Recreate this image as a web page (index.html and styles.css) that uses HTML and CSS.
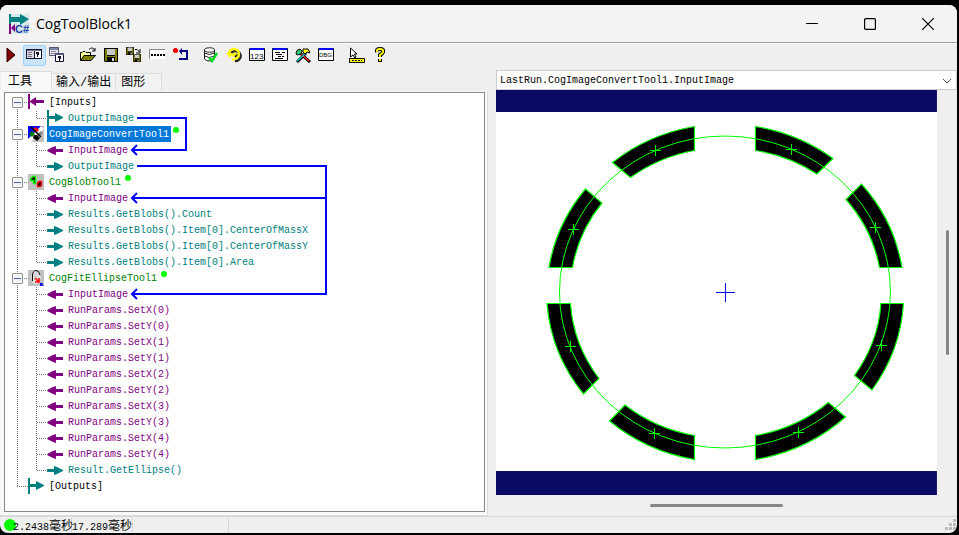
FILE: index.html
```html
<!DOCTYPE html>
<html lang="zh-CN">
<head>
<meta charset="utf-8">
<title>CogToolBlock1</title>
<link rel="stylesheet" href="styles.css">
</head>
<body>
<svg class="defs" aria-hidden="true">
  <symbol id="in" viewBox="0 0 16 16"><path d="M0 8L6 5L9 4V7H16V10H9V13L6 12L0 9Z" fill="#800080"/></symbol>
  <symbol id="out" viewBox="0 0 16 16"><path d="M16 8L10 5L7 4V7H0V10H7V13L10 12L16 9Z" fill="#008080"/></symbol>
  <symbol id="in-bar" viewBox="0 0 16 16"><path d="M0 0H2V15H0ZM2 7L8 3V6H16V9H8V12L2 8Z" fill="#800080"/></symbol>
  <symbol id="out-bar" viewBox="0 0 16 16"><path d="M0 0H2V16H0ZM2 6H8V3L16 7V8L8 12V9H2Z" fill="#008080"/></symbol>
  <symbol id="disk" viewBox="0 0 14 14"><path d="M0 0H14V14H1L0 13Z" fill="#000"/><path d="M1 1H13V13H1Z" fill="#808000"/><path d="M3 0H11V8H3Z" fill="#000"/><path d="M3 1H11V7H3Z" fill="#c8c8c8"/><path d="M3 9H11V14H3Z" fill="#000"/><path d="M8 10H10V13H8Z" fill="#ddd"/></symbol>
</svg>
<div class="window">
  <header class="titlebar">
    <svg class="app-icon" viewBox="0 0 20 20">
      <path d="M0 0H20V20H0Z" fill="#d5e9e9"/><path d="M0 0H2V10H0ZM2 3H11V0L20 5L11 11V8H2Z" fill="#008080"/><path d="M0 10H2V20H0ZM2 14L6 10V18Z" fill="#800080"/>
      <text x="6" y="19" class="icon-cs">C#</text>
    </svg>
    <h1>CogToolBlock1</h1>
    <button class="caption" aria-label="Minimize"><svg viewBox="0 0 12 12"><path d="M0 5.500H12" stroke="#000"/></svg></button>
    <button class="caption" aria-label="Maximize"><svg viewBox="0 0 12 12"><rect x=".6" y=".6" width="10.8" height="10.8" rx="1" fill="none" stroke="#000" stroke-width="1.2"/></svg></button>
    <button class="caption" aria-label="Close"><svg viewBox="0 0 12 12"><path d="M0 0L12 12M12 0L0 12" stroke="#000" stroke-width="1.2"/></svg></button>
  </header>
  <nav class="toolbar">
    <button aria-label="Run"><svg viewBox="0 0 16 16"><path d="M4 1L12 8L4 15Z" fill="#800000" stroke="#300"/></svg></button>
    <button class="on" aria-label="Local display"><svg viewBox="0 0 16 16"><path d="M0 2H16V12H0Z" fill="#113"/><path d="M1 4H8V11H1Z" fill="#d8d8e0"/><path d="M9 4H15V11H9Z" fill="#fff"/><path d="M1 3H15V4H1Z" fill="#778"/><path d="M2 5.500H6M2 7.500H6M2 9.500H6" stroke="#778"/><path d="M10 5H13V8H12V10H11V7H10Z" fill="#113"/></svg></button>
    <button aria-label="Floating display"><svg viewBox="0 0 16 16"><path d="M.5 .5H9.500V8.500H.5Z" fill="#e4e4e8" stroke="#557"/><path d="M1 1H9V3H1Z" fill="#7784a8"/><path d="M2 4.500H7M2 6.500H6" stroke="#889"/><path d="M6.500 6.500H14.500V14.500H6.500Z" fill="#fff" stroke="#113"/><path d="M6 6H15V8H6Z" fill="#557"/><path d="M9 9H12V12H11V14H10V11H9Z" fill="#113"/></svg></button>
    <i></i>
    <button aria-label="Open"><svg viewBox="0 0 16 16"><path d="M.5 13.500V5.500H2L3 4.500H5L6 5.500H10.500V8.500" fill="#ffff9c" stroke="#000"/><path d="M.5 13.500L4 8.500H15.500L11 13.500Z" fill="#808000" stroke="#000"/><path d="M9 2.500C11 .5 13 .5 14.500 3M15 1V4H12" fill="none" stroke="#000"/></svg></button>
    <button aria-label="Save"><svg viewBox="-1 -1 16 16"><use href="#disk" width="14" height="14"/></svg></button>
    <button aria-label="Save as"><svg viewBox="0 0 16 16"><use href="#disk" width="8" height="8"/><use href="#disk" x="7" y="7" width="8" height="8"/><path d="M9 2.500H11L13.500 5M14 2V6H10" fill="none" stroke="#000"/></svg></button>
    <button aria-label="Electrode"><svg viewBox="0 0 16 16"><path d="M0 2H16V12H0Z" fill="#fff"/><path d="M.5 12V2.500H16" fill="none" stroke="#888"/><path d="M2 8H4M5 8H7M8 8H10M11 8H13M14 8H16" stroke="#000" stroke-width="2"/></svg></button>
    <button aria-label="Reset"><svg viewBox="0 0 16 16"><path d="M1 2H2V1H5V2H6V5H5V6H2V5H1Z" fill="#f00"/><path d="M7 4L10 1V3H16V13H7V11H14V5H10V8Z" fill="#000080"/></svg></button>
    <i></i>
    <button aria-label="Results"><svg viewBox="0 0 16 16"><path d="M1.500 3V12Q6 16 11.500 12V3" fill="#fff" stroke="#222"/><ellipse cx="6.500" cy="3" rx="5" ry="2.200" fill="#fff" stroke="#222"/><path d="M1.500 6Q6 9 11.500 6M1.500 9Q6 12 11.500 9" fill="none" stroke="#222"/><path d="M6 11L9 14L14 6" fill="none" stroke="#00d81c" stroke-width="2.500"/></svg></button>
    <button aria-label="Undo"><svg viewBox="0 0 16 16"><path d="M4 6A5 5 0 1 1 8 13M8 9L10 7L8 6" transform="translate(1 1)" fill="none" stroke="#222" stroke-width="2.500"/><path d="M3 6A5 5 0 1 1 8 12L6 13M6 9L9 7L8 6" fill="none" stroke="#ff0" stroke-width="2.600"/><path d="M0 6L7 6L4 11Z" fill="#ff0"/></svg></button>
    <button aria-label="Numbers"><svg viewBox="0 0 16 16"><path d="M.5 1.500H15.500V13.500H.5Z" fill="#fff" stroke="#000"/><path d="M1 1H15V3H1Z" fill="#00f"/><text x="1" y="12" class="icon-num">123</text></svg></button>
    <button aria-label="Script"><svg viewBox="0 0 16 16"><path d="M.5 1.500H15.500V13.500H.5Z" fill="#fff" stroke="#000"/><path d="M1 1H15V3H1Z" fill="#00f"/><path d="M3 5.500H8M10 5.500H13M4 7.500H10M6 9.500H9M10 9.500H12M3 11.500H11" stroke="#000"/></svg></button>
    <button aria-label="Tools"><svg viewBox="0 0 16 16"><path d="M5 6L15 15M11 6L2 15" stroke="#000" stroke-width="3"/><path d="M5 6L14 14" stroke="#f22" stroke-width="1.500"/><path d="M11 6L2 14" stroke="#0cc" stroke-width="1.500"/><path d="M1 6Q1 3 5 2L7 4L6 7L2 8Z" fill="#3c7" stroke="#000"/><path d="M8 2H13L15 6L12 5L10 7L8 5Z" fill="#ff0" stroke="#000"/></svg></button>
    <button aria-label="Debug"><svg viewBox="0 0 16 16"><path d="M.5 1.500H15.500V13.500H.5Z" fill="#fff" stroke="#000"/><path d="M1 1H15V3H1Z" fill="#00f"/><text x="1" y="10" class="icon-dbg">DBG</text></svg></button>
    <i></i>
    <button aria-label="Tooltips"><svg viewBox="0 0 16 16"><path d="M1.500 1V10L4 8L6 11L7 10L5.500 7H8Z" fill="#fff" stroke="#000"/><path d="M.5 11.500H15.500V15.500H.5Z" fill="#ff0" stroke="#000"/><path d="M3 13.500H13" stroke="#000" stroke-dasharray="2 1"/></svg></button>
    <button aria-label="Help"><svg viewBox="0 0 16 16"><path d="M5 5Q4 2 8 2Q12 2 11 5Q11 6 8 8V10M8 12V15" fill="none" stroke="#000" stroke-width="4"/><path d="M5 5Q4 2 8 2Q12 2 11 5Q11 6 8 8V10M8 12V14" fill="none" stroke="#ff0" stroke-width="2"/></svg></button>
  </nav>
  <main>
    <section class="left">
      <div class="tabs" role="tablist">
        <button role="tab" aria-selected="true">工具</button>
        <button role="tab">输入/输出</button>
        <button role="tab">图形</button>
      </div>
      <div class="page">
        <div class="tree">
          <ul>
            <li><div class="root"><button class="toggle" aria-label="Collapse"></button><svg><use href="#in-bar"/></svg><span>[Inputs]</span></div>
              <ul><li class="out"><svg><use href="#out-bar"/></svg>OutputImage</li></ul></li>
            <li><div class="root tool"><button class="toggle" aria-label="Collapse"></button>
              <svg viewBox="0 0 16 16"><path d="M0 0H16V16H0Z" fill="#c0c0c0"/><path d="M0 0H14L0 14Z" fill="#00f"/><path d="M0 13L13 0L16 3L3 16H0Z" fill="#fff"/><path d="M6 9L9 9L12 12L9 15L5 12Z" fill="#000"/><path d="M5 3L8 1L11 4L8 7Z" fill="#f00"/><path d="M1 8L4 5L7 8L4 11Z" fill="#008000"/><path d="M9 8L13 5L15 7L11 11Z" fill="#888"/><path d="M3 1L13 11" stroke="#000" stroke-width="1.500"/></svg>
              <span class="selected">CogImageConvertTool1</span><b></b></div>
              <ul><li class="in"><svg><use href="#in"/></svg>InputImage</li><li class="out"><svg><use href="#out"/></svg>OutputImage</li></ul></li>
            <li><div class="root tool"><button class="toggle" aria-label="Collapse"></button>
              <svg viewBox="0 0 16 16"><path d="M0 0H16V16H0Z" fill="#c0c0c0"/><path d="M2.500 5L5 2.500H7.500V9.500H5.500V6.500H3Z" fill="#000" stroke="#0e0" stroke-width="1.500"/><path d="M9.500 9L11 7.500H13.500V11.500L12 12.500H9.500Z" fill="#000" stroke="#f00" stroke-width="1.500"/></svg>
              <span>CogBlobTool1</span><b></b></div>
              <ul><li class="in"><svg><use href="#in"/></svg>InputImage</li><li class="out"><svg><use href="#out"/></svg>Results.GetBlobs().Count</li><li class="out"><svg><use href="#out"/></svg>Results.GetBlobs().Item[0].CenterOfMassX</li><li class="out"><svg><use href="#out"/></svg>Results.GetBlobs().Item[0].CenterOfMassY</li><li class="out"><svg><use href="#out"/></svg>Results.GetBlobs().Item[0].Area</li></ul></li>
            <li><div class="root tool"><button class="toggle" aria-label="Collapse"></button>
              <svg viewBox="0 0 16 16"><path d="M0 0H16V16H0Z" fill="#c0c0c0"/><ellipse cx="8" cy="7" rx="4" ry="6.500" fill="#d8d8d8" stroke="#fff"/><path d="M4.500 11V5Q5 .5 8 .5Q11 .5 12 5" fill="none" stroke="#000"/><path d="M7 8L10 11M11 8V12H7" fill="none" stroke="#f00" stroke-width="1.500"/><path d="M12 13H15L14 14L16 16H14L13 15V16H12Z" fill="#00f"/></svg>
              <span>CogFitEllipseTool1</span><b></b></div>
              <ul><li class="in"><svg><use href="#in"/></svg>InputImage</li><li class="in"><svg><use href="#in"/></svg>RunParams.SetX(0)</li><li class="in"><svg><use href="#in"/></svg>RunParams.SetY(0)</li><li class="in"><svg><use href="#in"/></svg>RunParams.SetX(1)</li><li class="in"><svg><use href="#in"/></svg>RunParams.SetY(1)</li><li class="in"><svg><use href="#in"/></svg>RunParams.SetX(2)</li><li class="in"><svg><use href="#in"/></svg>RunParams.SetY(2)</li><li class="in"><svg><use href="#in"/></svg>RunParams.SetX(3)</li><li class="in"><svg><use href="#in"/></svg>RunParams.SetY(3)</li><li class="in"><svg><use href="#in"/></svg>RunParams.SetX(4)</li><li class="in"><svg><use href="#in"/></svg>RunParams.SetY(4)</li><li class="out"><svg><use href="#out"/></svg>Result.GetEllipse()</li></ul></li>
            <li><div class="root leaf"><svg><use href="#out-bar"/></svg><span>[Outputs]</span></div></li>
          </ul>
          <svg class="wires" viewBox="0 0 330 402" fill="none">
            <path d="M12.500 16V35M12.500 48V83M12.500 96V179M12.500 192V393M12 393.500H24M19 9.500H23M19 41.500H23M19 89.500H23M19 185.500H23M31.500 18V25M32 25.500H43M31.500 50V73M32 57.500H43M32 73.500H43M31.500 98V169M32 105.500H43M32 121.500H43M32 137.500H43M32 153.500H43M32 169.500H43M31.500 194V377M32 201.500H43M32 217.500H43M32 233.500H43M32 249.500H43M32 265.500H43M32 281.500H43M32 297.500H43M32 313.500H43M32 329.500H43M32 345.500H43M32 361.500H43M32 377.500H43" stroke="#777" stroke-dasharray="1 1"/>
            <path d="M132 25H181V57H127M132 73H321V201H127M321 105H127M132 52L127 57L132 62M132 100L127 105L132 110M132 196L127 201L132 206" stroke="#00f" stroke-width="2"/>
          </svg>
        </div>
      </div>
    </section>
    <section class="right">
      <div class="combo">
        <select aria-label="Display record"><option>LastRun.CogImageConvertTool1.InputImage</option></select>
        <svg viewBox="0 0 10 6"><path d="M1 1L5 5L9 1" fill="none" stroke="#555"/></svg>
      </div>
      <div class="view">
        <svg class="display" viewBox="496 90 441 405" preserveAspectRatio="none">
          <path d="M496 90H937V495H496Z" fill="#fff"/>
          <path d="M496 90H937V112H496ZM496 471H937V495H496Z" fill="#0a0a64"/>
          <g fill="#000" stroke="#0f0" stroke-width="1.200">
            <path d="M612.500 162.500A178 169 0 0 1 694.500 126.500V150.500A154 145 0 0 0 630.500 177.500Z"/>
            <path d="M585.500 189L602 203A154 145 0 0 0 572.500 267.500H549A178 169 0 0 1 585.500 189Z"/>
            <path d="M755.500 126.500A178 169 0 0 1 833 158.500L817 174A154 145 0 0 0 755.500 150.500Z"/>
            <path d="M861.500 184A178 169 0 0 1 902 267.500H879.500A154 145 0 0 0 846 199.500Z"/>
            <path d="M547 303.500H570.500A154 145 0 0 0 599 378.500L583.500 394A178 169 0 0 1 547 303.500Z"/>
            <path d="M625 405A154 145 0 0 0 694.500 435.500V459.500A178 169 0 0 1 609.500 421Z"/>
            <path d="M881 303.500H903.500A178 169 0 0 1 872 390L854.500 375.500A154 145 0 0 0 881 303.500Z"/>
            <path d="M755.500 435.500A154 145 0 0 0 828.500 402.500L845.500 417A178 169 0 0 1 755.500 459.500Z"/>
          </g>
          <ellipse cx="725" cy="292" rx="165.500" ry="156" fill="none" stroke="#0f0"/>
          <path d="M650 150.500H661M655.500 145V156M568 229.500H579M573.500 224V235M786 149.500H797M791.500 144V155M870 227.500H881M875.500 222V233M565 346.500H576M570.500 341V352M649 433.500H660M654.500 428V439M876 345.500H887M881.500 340V351M793 432.500H804M798.500 427V438" stroke="#0f0"/>
          <path d="M716 292.500H735M725.500 283V302" stroke="#00f"/>
        </svg>
        <div class="vbar"><div></div></div>
        <div class="hbar"><div></div></div>
      </div>
    </section>
  </main>
  <footer>
    <span class="lamp"></span>
    <span class="cell">2.2438<em>毫秒</em></span>
    <span class="cell">17.289<em>毫秒</em></span>
    <span class="cell wide"></span>
    <svg class="grip" viewBox="0 0 12 12"><path d="M8 0H11V3H8ZM4 4H7V7H4ZM8 4H11V7H8ZM0 8H3V11H0ZM4 8H7V11H4ZM8 8H11V11H8Z" fill="#bbb"/></svg>
  </footer>
</div>
</body>
</html>
```
FILE: styles.css
```css
* { box-sizing: border-box; }
body {
  margin: 0;
  height: 100vh;
  padding: 5px 2px 2px 0;
  background: #000;
  font: 10px/18px "Liberation Mono", "Noto Sans CJK SC", monospace;
  color: #000;
}
button, select { margin: 0; padding: 0; border: 0; background: none; font: inherit; color: inherit; }
ul { margin: 0; padding: 0; list-style: none; }
.defs { position: absolute; width: 0; height: 0; }

.window {
  display: flex;
  flex-direction: column;
  height: 100%;
  overflow: hidden;
  border-radius: 8px;
  background: #efefef;
}

.titlebar { display: flex; align-items: center; height: 37px; background: #f3f3f3; }
.app-icon { width: 20px; height: 20px; margin: 0 7px 0 9px; }
.icon-cs { font: bold 11px "Liberation Sans", sans-serif; fill: #1c3fa8; }
.titlebar h1 { flex: 1; margin: 0; font: 14px/20px "Open Sans", sans-serif; }
.caption { display: flex; align-items: center; justify-content: center; width: 58px; height: 37px; }
.caption svg { width: 12px; height: 12px; }

.toolbar { display: flex; height: 28px; border-top: 1px solid #a0a0a0; box-shadow: inset 0 1px #fff; padding-top: 2px; }
.toolbar button { display: flex; align-items: center; justify-content: center; width: 23px; height: 21px; padding: 0 1px 1px 0; border-radius: 3px; }
.toolbar i { width: 8px; }
.toolbar svg { width: 16px; height: 16px; }
.toolbar .on { background: #cce4f7; box-shadow: inset 0 0 0 1px #99d1ff; }
.icon-num { font: 8px "Liberation Sans", sans-serif; }
.icon-dbg { font: 6px "Liberation Sans", sans-serif; }

main { display: flex; flex: 1; min-height: 0; }
.left { display: flex; flex-direction: column; width: 51%; padding-top: 1px; }
.right { display: flex; flex-direction: column; flex: 1; padding-left: 8px; }

.tabs { display: flex; align-items: flex-end; height: 20px; padding-left: 1px; }
.tabs button {
  height: 18px;
  padding: 0 4px;
  border: 1px solid #ddd;
  border-width: 1px 1px 0 0;
  background: #f2f2f2;
  font: 12px/18px "Liberation Mono", "Noto Sans CJK SC", monospace;
}
.tabs button:last-child { padding: 0 16px 0 5px; }
.tabs [aria-selected] { height: 20px; padding: 0 19px 0 7px; background: #f9f9f9; }
.page { flex: 1; min-height: 0; padding: 1px 2px 3px 4px; border: 1px solid #dcdcdc; border-width: 0 1px 1px 0; background: #f9f9f9; }
.tree { position: relative; height: 100%; padding-top: 1px; border: 1px solid #828790; background: #fff; }
.tree svg { flex: none; width: 16px; height: 16px; }
.root { display: flex; height: 16px; padding-left: 7px; }
.root > svg { margin-left: 5px; }
.root span { margin-left: 3px; padding: 0 2px; }
.leaf { padding-left: 18px; }
.toggle {
  width: 11px;
  height: 11px;
  margin-top: 3px;
  border: 1px solid #919191;
  border-radius: 1px;
  background: linear-gradient(#4b63a7, #4b63a7) center / 7px 1px no-repeat, #f4f4f4;
}
.tool { color: #008000; }
.root .selected { background: #0078d7; color: #fff; }
.root b { width: 6px; height: 6px; margin: 1px 0 0 2px; border-radius: 3px; background: #0f0; }
.tree ul ul li { display: flex; gap: 5px; height: 16px; padding-left: 42px; }
.in { color: #800080; }
.out { color: #008080; }
.tree .wires { position: absolute; left: 0; top: 0; width: 330px; height: 402px; }

.combo { display: flex; align-items: center; height: 20px; padding: 1px 4px 0 0; border: 1px solid #ccc; background: #fff; }
.combo select { flex: 1; height: 17px; padding-left: 3px; appearance: none; outline: 0; }
.combo svg { width: 10px; height: 6px; }
.view { display: grid; grid-template: minmax(0, 1fr) 21px / minmax(0, 1fr) 20px; flex: 1; min-height: 0; }
.display { display: block; width: 100%; height: 100%; }
.vbar { display: flex; flex-direction: column; justify-content: center; align-items: center; }
.vbar div { width: 3px; height: 31%; border-radius: 2px; background: #858585; }
.hbar { display: flex; justify-content: center; align-items: center; }
.hbar div { width: 30%; height: 3px; border-radius: 2px; background: #858585; }

footer { display: flex; align-items: center; height: 17px; padding-left: 4px; border-top: 1px solid #d7d7d7; }
.lamp { width: 12px; height: 12px; border-radius: 6px; background: #0f0; }
.cell { display: flex; flex: none; align-items: baseline; width: 61px; height: 15px; border-right: 1px solid #d7d7d7; line-height: 14px; white-space: nowrap; }
.cell em { font: 12px/14px "Noto Sans CJK SC", sans-serif; }
.cell.wide { width: 96px; }
.lamp + .cell { width: 59px; margin-left: -3px; }
.grip { width: 12px; height: 12px; margin-left: auto; }
```
